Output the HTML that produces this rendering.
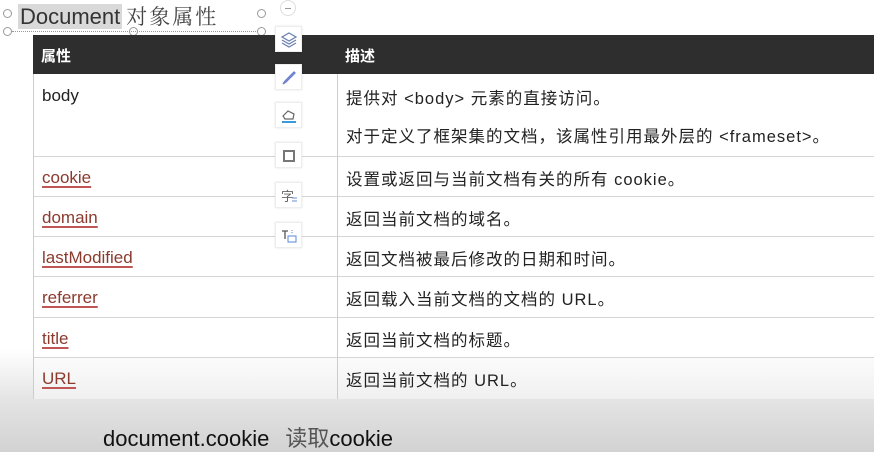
<!DOCTYPE html>
<html><head><meta charset="utf-8"><style>
*{margin:0;padding:0;box-sizing:border-box}
body{width:874px;height:452px;overflow:hidden;background:linear-gradient(to bottom,#fff 0,#fff 350px,#e4e4e4 400px,#d2d2d2 452px);position:relative;font-family:"Liberation Sans","Noto Sans CJK SC",sans-serif;color:#222}
.a{position:absolute}
.title{left:18px;top:1px;font-size:22px;color:#333;white-space:nowrap}
.title .hl{background:#d9d9d9;padding:0 2px}
.title .cn{font-family:"Noto Serif CJK SC","Noto Sans CJK SC",serif;color:#444;margin-left:4px;font-size:21px;letter-spacing:2px}
.h{width:9px;height:9px;border:1px solid #999;border-radius:50%;background:#fff}
.hdr{left:33px;top:35px;width:841px;height:39px;background:#2e2e2e}
.hdr span{position:absolute;top:10px;color:#fff;font-weight:bold;font-size:15px}
.tb{left:33px;top:74px;width:841px;height:325px;border-left:1px solid #ccc;border-bottom:1px solid #ccc;background:#fff}
.row{position:absolute;left:0;width:841px;border-bottom:1px solid #d5d5d5}
.col{position:absolute;left:304px;top:74px;width:1px;height:325px;background:#ccc}
.k{position:absolute;left:8px;font-size:17px;color:#8b3a2e;text-decoration:underline;text-decoration-color:#c05555;text-underline-offset:3px;text-decoration-thickness:2px}
.d{position:absolute;left:312px;font-size:16.5px;color:#222;white-space:nowrap;letter-spacing:1px}
.ic{left:275px;width:27px;height:26px;background:#fff;border:1px solid #eee;box-shadow:0 0 2px rgba(0,0,0,.12)}
.ic svg{position:absolute;left:4px;top:4px}
.foot{left:103px;top:421px;font-size:22px;color:#111;white-space:nowrap}
.foot .cn{color:#555;margin-left:16px}
</style></head><body>
<div class="a title"><span class="hl">Document</span><span class="cn">对象属性</span></div>
<div class="a h" style="left:3px;top:9px"></div>
<div class="a h" style="left:3px;top:27px"></div>
<div class="a h" style="left:129px;top:27px"></div>
<div class="a h" style="left:257px;top:9px"></div>
<div class="a h" style="left:257px;top:27px"></div>
<div class="a" style="left:12px;top:31px;width:246px;border-top:1px dotted #999"></div>
<div class="a" style="left:280px;top:0px;width:16px;height:16px;border:1px solid #ddd;border-radius:50%;background:#fff"><div style="position:absolute;left:4px;top:7px;width:6px;height:1px;background:#999"></div></div>

<div class="a hdr"><span style="left:8px">属性</span><span style="left:312px">描述</span></div>
<div class="a tb">
<div class="row" style="top:0;height:83px"><span class="k" style="top:12px;color:#222;text-decoration:none">body</span><span class="d" style="top:11px">提供对 &lt;body&gt; 元素的直接访问。</span><span class="d" style="top:49px">对于定义了框架集的文档，该属性引用最外层的 &lt;frameset&gt;。</span></div>
<div class="row" style="top:83px;height:40px"><span class="k" style="top:11px">cookie</span><span class="d" style="top:9px">设置或返回与当前文档有关的所有 cookie。</span></div>
<div class="row" style="top:123px;height:40px"><span class="k" style="top:11px">domain</span><span class="d" style="top:9px">返回当前文档的域名。</span></div>
<div class="row" style="top:163px;height:40px"><span class="k" style="top:11px">lastModified</span><span class="d" style="top:9px">返回文档被最后修改的日期和时间。</span></div>
<div class="row" style="top:203px;height:41px"><span class="k" style="top:11px">referrer</span><span class="d" style="top:9px">返回载入当前文档的文档的 URL。</span></div>
<div class="row" style="top:244px;height:40px"><span class="k" style="top:11px">title</span><span class="d" style="top:9px">返回当前文档的标题。</span></div>
<div class="row" style="top:284px;height:41px;border-bottom:none;background:linear-gradient(#fbfbfb,#f0f0f0)"><span class="k" style="top:11px">URL</span><span class="d" style="top:9px">返回当前文档的 URL。</span></div>
</div>
<div class="a col" style="left:337px"></div>

<div class="a ic" style="top:26px"><svg width="18" height="18" viewBox="0 0 18 18" fill="none" stroke="#6a7fb0" stroke-width="1.2"><path d="M9 2 L16 6 L9 10 L2 6 Z"/><path d="M2 9 L9 13 L16 9"/><path d="M2 12 L9 16 L16 12"/></svg></div>
<div class="a ic" style="top:64px"><svg width="18" height="18" viewBox="0 0 18 18" fill="none" stroke="#6a7fd0" stroke-width="1.3"><path d="M14 3 L5 12 L3 15 L6 13 L15 4 Z"/></svg></div>
<div class="a ic" style="top:102px"><svg width="18" height="18" viewBox="0 0 18 18" fill="none" stroke="#666" stroke-width="1.2"><path d="M3 9 L8 4 L14 7 L13 12 L5 12 Z"/><path d="M2 15 H16" stroke="#3a9ad9" stroke-width="2"/></svg></div>
<div class="a ic" style="top:142px"><svg width="18" height="18" viewBox="0 0 18 18" fill="none" stroke="#777" stroke-width="2"><rect x="4" y="4" width="10" height="10"/></svg></div>
<div class="a ic" style="top:182px"><svg width="18" height="18" viewBox="0 0 18 18"><text x="1" y="14" font-size="13" fill="#666" font-family="Noto Sans CJK SC">字</text><path d="M12 11 H17 M12 14 H17" stroke="#6a8fd0" stroke-width="1"/></svg></div>
<div class="a ic" style="top:222px"><svg width="18" height="18" viewBox="0 0 18 18" fill="none"><path d="M2 4 H8 M5 4 V12" stroke="#555" stroke-width="1.3"/><rect x="8" y="9" width="8" height="6" stroke="#5a8ad8" stroke-width="1"/><path d="M12 3 V7" stroke="#5a8ad8" stroke-width="1" stroke-dasharray="1 1"/></svg></div>

<div class="a foot">document.cookie<span class="cn">读取</span>cookie</div>
</body></html>
